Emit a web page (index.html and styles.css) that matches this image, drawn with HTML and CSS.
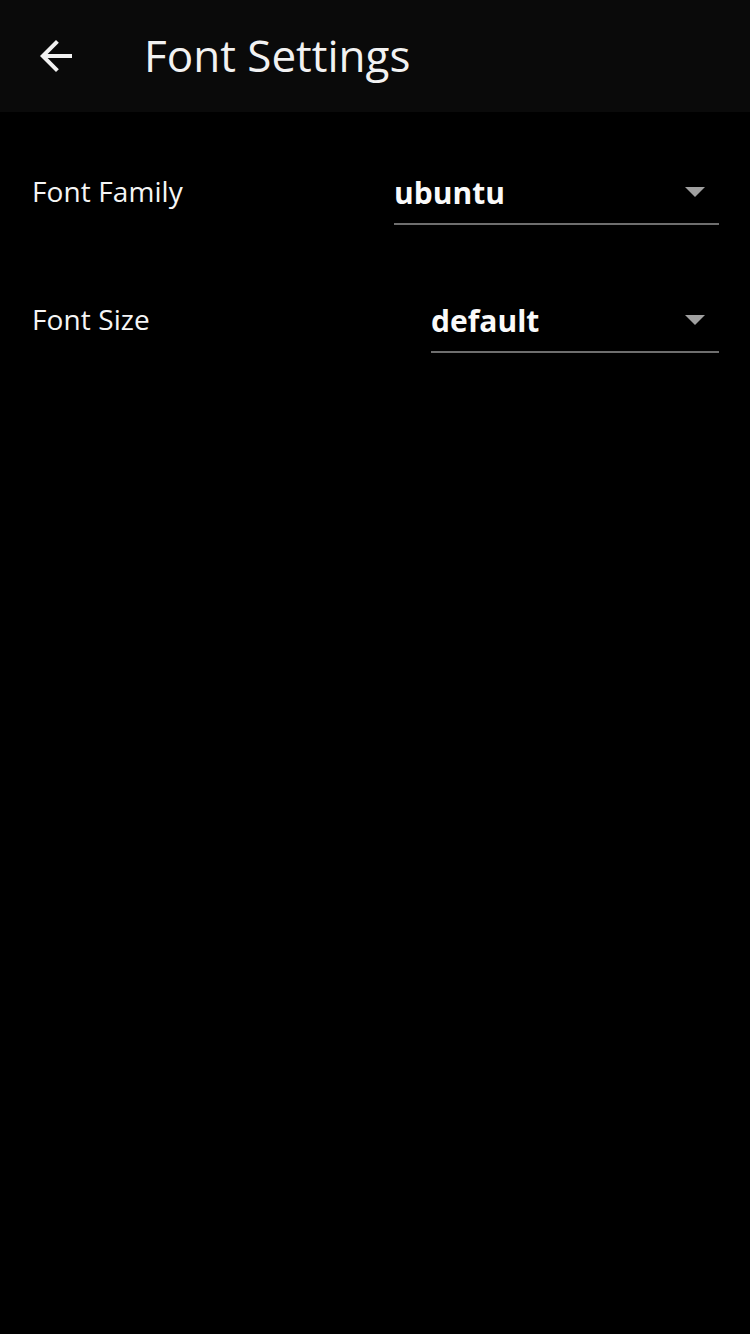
FILE: index.html
```html
<!DOCTYPE html>
<html>
<head>
<meta charset="utf-8">
<link rel="stylesheet" href="styles.css">
</head>
<body>
<header class="appbar">
  <div class="back">
    <svg viewBox="0 0 24 24" width="48" height="48"><path d="M20 11H7.83l5.59-5.59L12 4l-8 8 8 8 1.41-1.41L7.83 13H20v-2z" fill="#f2f2f2"/></svg>
  </div>
  <h1 class="title">Font Settings</h1>
</header>
<main class="list">
  <div class="row">
    <span class="label">Font Family</span>
    <div class="dropdown dd-family">
      <span class="value">ubuntu</span>
      <span class="caret"></span>
    </div>
  </div>
  <div class="row">
    <span class="label">Font Size</span>
    <div class="dropdown dd-size">
      <span class="value">default</span>
      <span class="caret"></span>
    </div>
  </div>
</main>
</body>
</html>
```
FILE: styles.css
```css
html, body {
  margin: 0;
  padding: 0;
  background: #000;
  width: 750px;
  height: 1334px;
  font-family: "Open Sans", "Noto Sans", sans-serif;
  color: #f2f2f2;
}
.appbar {
  height: 112px;
  background: #0a0a0a;
  display: flex;
  align-items: center;
  padding-left: 32px;
  box-sizing: border-box;
}
.back {
  width: 48px;
  height: 48px;
  display: flex;
}
.title {
  margin: 0 0 0 64px;
  font-size: 44px;
  font-weight: 400;
  letter-spacing: 0;
  color: #f2f2f2;
  line-height: 1;
  margin-top: -2px;
}
.list {
  padding: 48px 31px 0 32px;
  display: flex;
  flex-direction: column;
  gap: 64px;
}
.row {
  display: flex;
  align-items: center;
  justify-content: space-between;
  height: 64px;
}
.label {
  font-size: 28px;
  color: #f5f5f5;
  letter-spacing: 0.1px;
  margin-top: -2px;
}
.dropdown {
  height: 64px;
  box-sizing: border-box;
  border-bottom: 2px solid #6e6e6e;
  display: flex;
  align-items: center;
  justify-content: space-between;
  padding: 0 14px 0 0;
  margin-bottom: -2px;
}
.dd-family { width: 325px; }
.dd-size { width: 288px; }
.value {
  font-size: 30px;
  font-weight: 700;
  color: #fafafa;
  letter-spacing: 0;
}
.caret {
  width: 0;
  height: 0;
  border-left: 10px solid transparent;
  border-right: 10px solid transparent;
  border-top: 10px solid #a0a0a0;
}
```
